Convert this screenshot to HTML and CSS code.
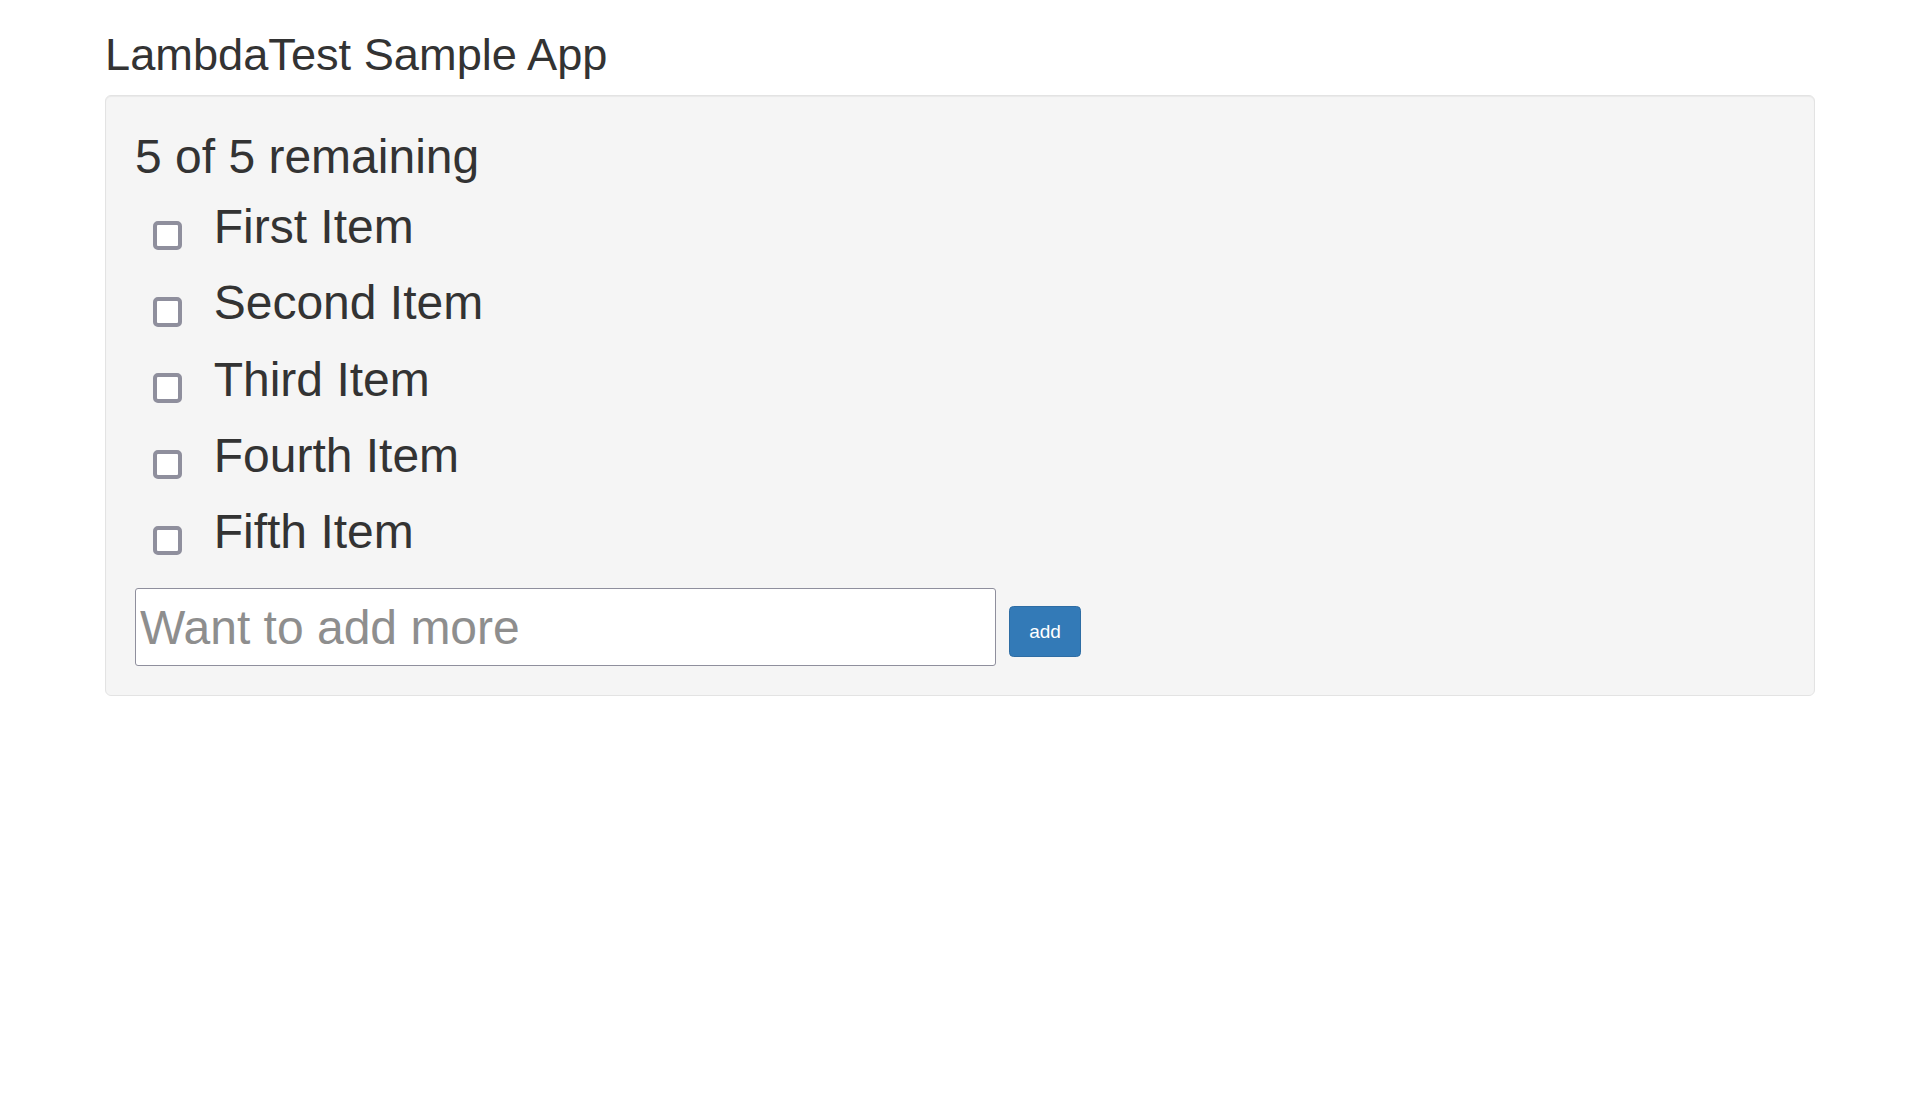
FILE: index.html
```html
<!DOCTYPE html>
<html lang="en">
<head>
<meta charset="utf-8">
<title>LambdaTest Sample App</title>
<link rel="stylesheet" href="styles.css">
</head>
<body>
<div class="container">
  <h2 class="title">LambdaTest Sample App</h2>
  <div class="well">
    <div class="remaining">5 of 5 remaining</div>
    <ul class="todo-list">
      <li class="todo-item"><input type="checkbox" class="check" name="li1"><span class="todo-text">First Item</span></li>
      <li class="todo-item"><input type="checkbox" class="check" name="li2"><span class="todo-text">Second Item</span></li>
      <li class="todo-item"><input type="checkbox" class="check" name="li3"><span class="todo-text">Third Item</span></li>
      <li class="todo-item"><input type="checkbox" class="check" name="li4"><span class="todo-text">Fourth Item</span></li>
      <li class="todo-item"><input type="checkbox" class="check" name="li5"><span class="todo-text">Fifth Item</span></li>
    </ul>
    <form class="add-form">
      <input type="text" class="add-input" placeholder="Want to add more">
      <button type="button" class="add-btn">add</button>
    </form>
  </div>
</div>
</body>
</html>
```

FILE: styles.css
```css
html, body {
  margin: 0;
  padding: 0;
  background: #ffffff;
}

body {
  font-family: "Liberation Sans", Arial, sans-serif;
  color: #333333;
}

.container {
  padding: 0 105px;
}

.title {
  font-size: 45.2px;
  font-weight: 400;
  line-height: 49.5px;
  margin: 30px 0 15px 0;
}

.well {
  background: #f5f5f5;
  border: 1px solid #e3e3e3;
  border-radius: 6px;
  box-shadow: inset 0 1px 1px rgba(0, 0, 0, 0.05);
  padding: 29px 29px 29px 29px;
}

.remaining {
  font-size: 48px;
  line-height: 64.5px;
}

.todo-list {
  list-style: none;
  margin: 0;
  padding: 0;
}

.todo-item {
  font-size: 48px;
  line-height: 76.25px;
  white-space: nowrap;
}

.check {
  -webkit-appearance: none;
  appearance: none;
  display: inline-block;
  box-sizing: border-box;
  width: 29.5px;
  height: 29.5px;
  margin: 0 31.5px 0 17.7px;
  border: 4.5px solid #8f8f9d;
  border-radius: 5px;
  background: #ffffff;
  vertical-align: -7.3px;
}

.add-form {
  display: flex;
  align-items: flex-start;
  margin: 18px 0 0 0;
}

.add-input {
  box-sizing: border-box;
  width: 861px;
  height: 78px;
  margin: 0;
  padding: 0 4px;
  border: 1px solid #8f8f9d;
  border-radius: 3px;
  background: #ffffff;
  font-family: "Liberation Sans", Arial, sans-serif;
  font-size: 48px;
  color: #333333;
  outline: none;
}

.add-input::placeholder {
  color: #8e8e8e;
  opacity: 1;
}

.add-btn {
  box-sizing: border-box;
  width: 72px;
  height: 50.5px;
  margin: 18px 0 0 13px;
  padding: 0;
  border: 1px solid #2e6da4;
  border-radius: 4.5px;
  background: #337ab7;
  color: #ffffff;
  font-family: "Liberation Sans", Arial, sans-serif;
  font-size: 19px;
  line-height: 1;
  cursor: pointer;
}
```
